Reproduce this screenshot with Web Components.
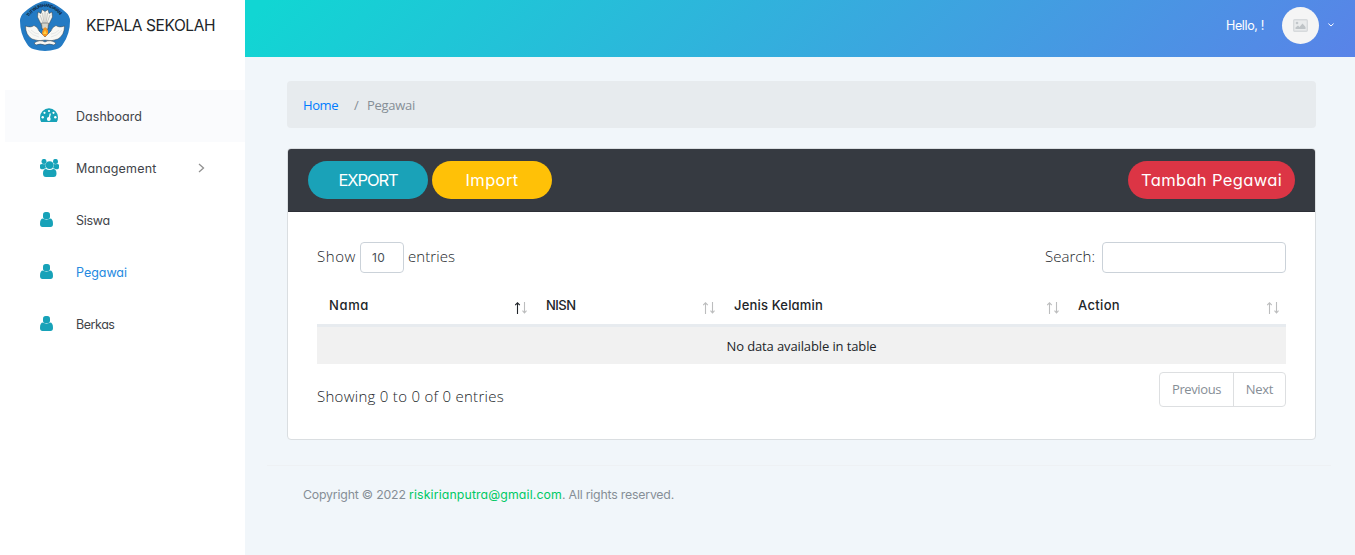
<!DOCTYPE html>
<html lang="id"><head><meta charset="utf-8"><title>Pegawai</title>
<style>
html,body{margin:0;height:100%;overflow:hidden}
body{font-family:"Open Sans","Noto Sans",sans-serif;font-size:13px;color:#212529;background:#f1f6fa}
</style></head><body>
<app-shell></app-shell>
<script>
const define=(name,html,init)=>customElements.define(name,class extends HTMLElement{
  constructor(){super();this.attachShadow({mode:'open'})}
  connectedCallback(){this.shadowRoot.innerHTML=html;if(init)init.call(this,this.shadowRoot)}
});

/* Single-line label whose tracking adapts to the width in its "w" attribute. */
define('ui-label',`<style>
:host{display:inline-block;white-space:nowrap;flex:none}
:host([geo]){font-family:Inter,"Open Sans",sans-serif;font-feature-settings:"cv11"}
span{display:inline-block;white-space:nowrap}
</style><span><slot></slot></span>`,function(root){
  const w=+this.getAttribute('w');
  const s=root.querySelector('span');
  const n=this.textContent.length;
  if(!w)return;
  s.style.letterSpacing='0px';
  s.style.letterSpacing=((w-s.getBoundingClientRect().width)/n).toFixed(3)+'px';
  this.style.width=w+'px';
});

define('school-logo',`<style>:host{display:block;width:50px;height:50px}svg{display:block}</style>
<svg width="50" height="50" viewBox="0 0 50 50">
<path d="M22 .5Q25-.4 28 .5Q38 4 46 11.500Q50 15 50 20Q50 33 43 43Q41 47 36 48.300Q25 51.500 14 48.300Q9 47 7 43Q0 33 0 20Q0 15 4 11.500Q12 4 22 .5Z" fill="#247bc4"/>
<path id="arc" d="M8.500 16Q25-4.500 41.500 16" fill="none"/>
<text font-family="Liberation Sans,sans-serif" font-weight="700" font-size="4.600" fill="#102a42"><textPath href="#arc" textLength="38">TUT WURI HANDAYANI</textPath></text>
<g stroke="#2b333b" stroke-width=".45" stroke-linejoin="round">
<path d="M5.500 25Q11 27 14 24.500Q18 26 19 30L25 36L31 30Q32 26 36 24.500Q39 27 44.500 25Q44.500 34 38 38Q31 41 25 39Q19 41 12 38Q5.500 34 5.500 25Z" fill="#f8f8f5"/>
<path d="M22 25L17.500 16L18 11L21 12.500L22 8.500L25 10.500L28 8.500L29 12.500L32 11L32.500 16L28 25Z" fill="#f4f3ed"/>
<path d="M21.500 22H28.500L28 28H22Z" fill="#d5d4ca"/>
<path d="M14 42Q20 38 25 41Q30 38 36 42L34 44Q29 42 25 44Q20 42 16 44Z" fill="#f8f8f5"/></g>
<path d="M22.500 12L24 22M25 10V22M27.500 12L26 22M20 14L23 22M30 14L27 22" stroke="#777" stroke-width=".35"/>
<path d="M8 29Q13 35 19 36M42 29Q37 35 31 36M11 29Q15 33 19 33M39 29Q35 33 31 33" stroke="#c9cdd0" stroke-width=".4" fill="none"/>
<path d="M25 26Q29 29 28 32Q27 35.500 25 35.500Q23 35.500 22 32Q22 29 25 26Z" fill="#f7951e"/><path d="M25 29L27 33H23Z" fill="#ffd042"/>
</svg>`);

const glyphs={
gauge:`<svg width="18" height="15" viewBox="0 0 18 15"><path d="M9 .3A9 9 0 0 0 0 9.300Q0 12.500 1.200 14H16.800Q18 12.500 18 9.300A9 9 0 0 0 9 .3Z" fill="#17a2b8"/><g fill="#fff"><circle cx="9" cy="3" r="1.100"/><circle cx="4.500" cy="4.800" r="1.100"/><circle cx="2.700" cy="9.300" r="1.200"/><circle cx="13.500" cy="4.800" r="1.100"/><circle cx="15.300" cy="9.300" r="1.200"/><circle cx="8.800" cy="11" r="1.900"/></g><path d="M9 11L10.300 5.500" stroke="#fff" stroke-width="1.300"/></svg>`,
users:`<svg width="19" height="18" viewBox="0 0 19 18" fill="#17a2b8"><circle cx="4" cy="2.400" r="2.500"/><circle cx="15.500" cy="2.400" r="2.500"/><path d="M0 5.700Q1 4.700 4 5.200L5.800 5Q5 8 6.300 9.300Q4.500 9.300 3.500 10.200H1.500Q0 10.200 0 8.500ZM19 5.700Q18 4.700 15.500 5.200L13.500 5Q14 8 12.800 9.300Q14.500 9.300 15.500 10.200H17.500Q19 10.200 19 8.500Z"/><circle cx="9.600" cy="6.100" r="3.900"/><path d="M3 14.500Q3 10 6 10Q9.500 12 13.200 10Q16.500 10 16.500 14.500Q16.500 18 13.500 18H6Q3 18 3 14.500Z"/></svg>`,
user:`<svg width="13" height="15" viewBox="0 0 13 15" fill="#17a2b8"><rect x="3" y="0" width="7" height="7.300" rx="2.700"/><path d="M0 12Q0 6.500 3 6.500Q6.500 8.800 10 6.500Q13 6.500 13 12Q13 15 10.500 15H2.500Q0 15 0 12Z"/></svg>`};

define('nav-item',`<style>
:host{display:flex;box-sizing:border-box;height:52px;margin-left:5px;padding:0 40px 1px 35px;align-items:center;color:#414449;font-size:12.500px}
:host([hover]){background:#fafbfd}:host([active]){color:#2589df}
i{display:flex;width:36px}svg{display:block}.arrow{margin-left:auto}
::slotted(ui-label){margin-top:2px}
</style><i></i><slot></slot>`,function(root){
  root.querySelector('i').innerHTML=glyphs[this.getAttribute('icon')];
  if(this.hasAttribute('more'))root.innerHTML+=`<svg class="arrow" width="7" height="10" viewBox="0 0 7 10"><path d="M1 1L5.500 5L1 9" fill="none" stroke="#919191" stroke-width="1.300"/></svg>`;
});

define('side-bar',`<style>
:host{display:block;background:#fff}
header{display:flex;height:51px;padding:1px 0 0 20px;box-sizing:border-box;gap:16px;align-items:flex-start}
header ui-label{font-size:15.500px;line-height:20px;margin-top:15px}
nav{display:flex;flex-direction:column;padding-top:39px}
</style><header><school-logo></school-logo><ui-label geo w="129">KEPALA SEKOLAH</ui-label></header>
<nav><nav-item icon="gauge" hover><ui-label geo w="66">Dashboard</ui-label></nav-item>
<nav-item icon="users" more><ui-label geo w="80.500">Management</ui-label></nav-item>
<nav-item icon="user"><ui-label geo w="34">Siswa</ui-label></nav-item>
<nav-item icon="user" active><ui-label geo w="51">Pegawai</ui-label></nav-item>
<nav-item icon="user"><ui-label geo w="38.500">Berkas</ui-label></nav-item></nav>`);

define('top-bar',`<style>
:host{display:flex;height:57px;box-sizing:border-box;background:linear-gradient(135deg,#11d6d3 0%,#11d6d3 2%,#5983e8 100%);padding:0 21px 6px 0;align-items:center;justify-content:flex-end;color:#fff;font-size:12.500px}
.avatar{display:flex;width:37px;height:37px;border-radius:50%;background:#f5f5f5;align-items:center;justify-content:center;margin:0 9px 0 18px}
</style><ui-label geo w="38">Hello, !</ui-label><span class="avatar"><svg width="15" height="13" viewBox="0 0 15 13"><rect x=".7" y=".7" width="13.600" height="11.600" rx="1" fill="#e9ebec" stroke="#d7dadc" stroke-width="1.400"/><circle cx="4" cy="4" r="1.300" fill="#c2c7ca"/><path d="M2.500 10V8.500L5 6.500L6.500 8L9.500 4.500L12.500 8V10Z" fill="#bfc4c7"/></svg></span>
<svg width="6" height="4" viewBox="0 0 6 4" style="margin-top:-2px"><path d="M.4 .6L3 3L5.600 .6" fill="none" stroke="#fff"/></svg>`);

define('crumb-bar',`<style>
:host{display:flex;height:47px;box-sizing:border-box;border-radius:4px;background:#e7ebee;align-items:center;padding:0 16px;color:#868e96}
.home{color:#007bff;margin-right:16px}.sep{margin-right:8px}
</style><ui-label class="home" w="35">Home</ui-label><ui-label class="sep" w="5">/</ui-label><ui-label w="48">Pegawai</ui-label>`);

define('pill-button',`<style>
:host{display:flex;box-sizing:border-box;width:var(--w,120px);height:38px;border-radius:19px;align-items:center;justify-content:center;padding-bottom:1px;color:#fff;background:var(--bg);font-size:16.500px}
</style><slot></slot>`);

define('sort-arrows',`<style>:host{display:block}svg{display:block}:host([asc]) .up{stroke:#212529}</style>
<svg width="12" height="12" viewBox="0 0 12 12" fill="none" stroke="#bcbdbe" stroke-width="1.100"><path class="up" d="M2.500 12V1M.2 3.200L2.500 .8L4.800 3.200"/><path d="M9.500 0V10.700M7.500 8.700L9.500 11L11.500 8.700"/></svg>`);

define('head-cell',`<style>
:host{display:flex;box-sizing:border-box;align-items:center;justify-content:space-between;padding:0 7px 0 12px;font-size:13px;font-weight:500}
sort-arrows{margin-top:5px}
</style><slot></slot><sort-arrows></sort-arrows>`,function(root){
  if(this.hasAttribute('asc'))root.querySelector('sort-arrows').setAttribute('asc','');
});

define('data-table',`<style>
:host{display:block}
.head{display:grid;grid-template-columns:217px 188px 344px 220px;height:38px}
.empty{border-top:3px solid #e7ebef;background:#f1f1f1;height:37px;display:flex;align-items:center;justify-content:center;box-sizing:content-box}
.empty ui-label{margin-top:1px}
</style><div class="head"><head-cell asc><ui-label geo w="40">Nama</ui-label></head-cell><head-cell><ui-label geo w="29.500">NISN</ui-label></head-cell><head-cell><ui-label geo w="89">Jenis Kelamin</ui-label></head-cell><head-cell><ui-label geo w="42">Action</ui-label></head-cell></div>
<div class="empty"><ui-label w="150">No data available in table</ui-label></div>`);

define('page-buttons',`<style>
:host{display:flex;box-sizing:border-box;border:1px solid #dddfe1;border-radius:4px;height:35px;width:127px;color:#868e96}
span{display:flex;align-items:center;justify-content:center;padding-bottom:1px}
.prev{width:73px;border-right:1px solid #dddfe1;padding-bottom:0}.next{flex:1}
.prev ui-label{margin-bottom:1px}
</style><span class="prev"><ui-label w="49">Previous</ui-label></span><span class="next"><ui-label w="27.500">Next</ui-label></span>`);

define('staff-card',`<style>
:host{display:flex;flex-direction:column;box-sizing:border-box;height:292px;border:1px solid #dadee1;border-radius:4px;background:#fff;overflow:hidden}
.bar{display:flex;gap:4px;align-items:center;background:#363a41;height:63px;box-sizing:border-box;padding:0 20px;border-bottom:1px solid #2c2f36}
.bar>:last-child{margin-left:auto}
.body{padding:30px 29px 0}
.tools,.foot{display:flex;justify-content:space-between;font-size:15px;font-weight:300}
.tools>div{display:flex;align-items:center}
.tools ui-label{margin-bottom:3px}
.len,.search{box-sizing:border-box;height:31px;border:1px solid #cbd2d9;border-radius:4px;background:#fff}
.len{width:44px;margin:0 4px;display:flex;align-items:center;padding-left:11px;font-size:12px;color:#495057;font-weight:400}
.len ui-label{margin-bottom:0}
.search{width:184px;margin-left:7px}
data-table{margin-top:13px}
.foot{margin-top:8px}.foot>ui-label{margin-top:14px;line-height:20px}
page-buttons{font-size:13px;font-weight:400}
</style><div class="bar"><pill-button style="--bg:#1aa2b8"><ui-label geo w="59">EXPORT</ui-label></pill-button><pill-button style="--bg:#ffc107"><ui-label geo w="53">Import</ui-label></pill-button><pill-button style="--bg:#dc3545;--w:167px"><ui-label geo w="141">Tambah Pegawai</ui-label></pill-button></div>
<div class="body"><div class="tools"><div><ui-label w="39">Show</ui-label><div class="len"><ui-label geo w="13">10</ui-label></div><ui-label w="47">entries</ui-label></div><div><ui-label w="50">Search:</ui-label><div class="search"></div></div></div>
<data-table></data-table><div class="foot"><ui-label w="187">Showing 0 to 0 of 0 entries</ui-label><page-buttons></page-buttons></div></div>`);

define('page-footer',`<style>
:host{display:flex;border-top:1px solid #eef1f4;padding:21px 36px 0;color:#868e96;font-size:12.300px;line-height:16px;white-space:pre}
.mail{color:#00c964}
</style><ui-label geo w="106">Copyright © 2022&nbsp;</ui-label><ui-label class="mail" geo w="153">riskirianputra@gmail.com</ui-label><ui-label geo w="112">. All rights reserved.</ui-label>`);

define('app-shell',`<style>
:host{display:grid;grid-template-columns:245px 1fr;height:100vh}
main{display:flex;flex-direction:column}
.content{display:flex;flex-direction:column;gap:20px;padding:24px 39px 0 42px}
page-footer{margin:25px 24px 0 22px}
</style><side-bar></side-bar><main><top-bar></top-bar><div class="content"><crumb-bar></crumb-bar><staff-card></staff-card></div><page-footer></page-footer></main>`);
</script></body></html>
